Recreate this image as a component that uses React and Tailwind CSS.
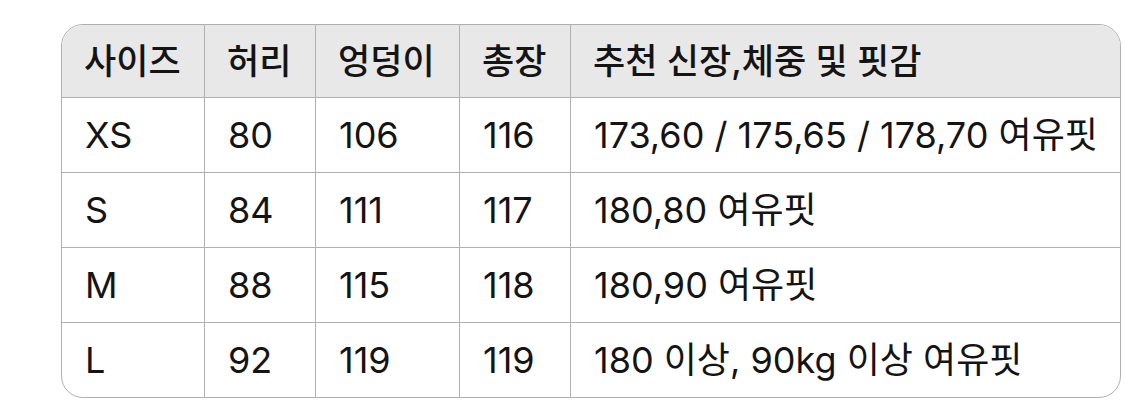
import React from "react";

const header = ["사이즈", "허리", "엉덩이", "총장", "추천 신장,체중 및 핏감"];
const rows = [
  ["XS", "80", "106", "116", "173,60 / 175,65 / 178,70 여유핏"],
  ["S", "84", "111", "117", "180,80 여유핏"],
  ["M", "88", "115", "118", "180,90 여유핏"],
  ["L", "92", "119", "119", "180 이상, 90kg 이상 여유핏"],
];

export default function App() {
  return (
    <div
      className="w-[1125px] h-[410px] bg-white pt-[24px] pl-[61px] pr-[5px]"
      style={{ fontFamily: "Inter, 'Noto Sans CJK KR', sans-serif" }}
    >
      <div className="w-[1060px] border border-[#b0b0b0] rounded-[22px] overflow-hidden grid grid-cols-[143px_111px_144px_111px_1fr] grid-rows-[73px_75px_75px_75px_74px] text-[36px] text-[#141414] leading-none">
        {header.map((h, i) => (
          <div
            key={h}
            className={
              "bg-[#e8e8e8] flex items-center pl-[22px] text-[35px] font-medium border-b border-[#b0b0b0] " +
              (i < 4 ? "border-r" : "")
            }
          >
            {h}
          </div>
        ))}
        {rows.map((r, ri) =>
          r.map((c, ci) => (
            <div
              key={ri + "-" + ci}
              className={
                "flex items-center pl-[23px] border-[#b0b0b0] " +
                (ci < 4 ? "border-r " : "") +
                (ri < 3 ? "border-b" : "")
              }
            >
              {c}
            </div>
          ))
        )}
      </div>
    </div>
  );
}
